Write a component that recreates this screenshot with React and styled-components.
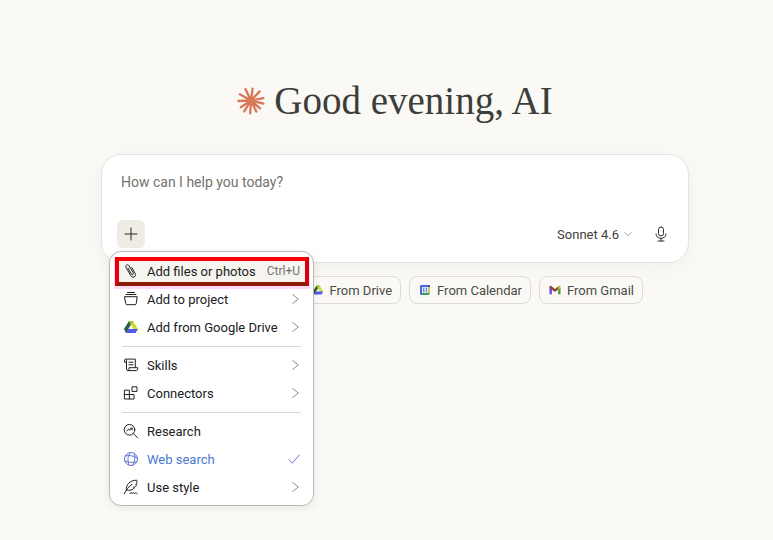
import styled, { createGlobalStyle, css } from 'styled-components'

const GlobalStyle = createGlobalStyle`
  *, *::before, *::after {
    box-sizing: border-box;
  }

  body {
    margin: 0;
    background: #faf9f5;
    color: #2b2b29;
    font-family: Roboto, 'Liberation Sans', Arial, sans-serif;
    font-size: 13px;
  }

  button, textarea {
    font: inherit;
    color: inherit;
  }
`

const Page = styled.main`
  min-height: 100vh;
  padding: 77px 84px 0 101px;
`

const Greeting = styled.header`
  display: flex;
  align-items: center;
  justify-content: center;
  gap: 9px;
  height: 48px;
  margin-bottom: 29px;
`

const Title = styled.h1`
  margin: 0;
  color: #3d3d3a;
  font-family: 'Liberation Serif', 'Times New Roman', serif;
  font-size: 39px;
  font-weight: 400;
  line-height: 48px;
  white-space: nowrap;
`

const Composer = styled.form`
  padding: 15px 15px 14px;
  border: 1px solid #e6e4dd;
  border-radius: 20px;
  background: #fff;
  box-shadow: 0 4px 20px rgba(0, 0, 0, 0.04);
`

const Prompt = styled.textarea`
  display: block;
  width: 100%;
  height: 24px;
  margin-bottom: 26px;
  padding: 0 4px;
  border: 0;
  outline: 0;
  background: none;
  font-size: 14px;
  line-height: 24px;
  resize: none;
  overflow: hidden;

  &::placeholder {
    color: #73726c;
    opacity: 1;
  }
`

const Toolbar = styled.div`
  display: flex;
  align-items: center;
  justify-content: space-between;
`

const ToolGroup = styled.div`
  display: flex;
  align-items: center;
  gap: 16px;
`

const MenuAnchor = styled.div`
  position: relative;
`

const IconButton = styled.button`
  display: grid;
  place-items: center;
  width: ${({ $width }) => $width || 28}px;
  height: 28px;
  padding: 0;
  border: 0;
  border-radius: 6px;
  background: ${({ $active }) => ($active ? '#efece5' : 'none')};
`

const ModelButton = styled.button`
  display: flex;
  align-items: center;
  gap: 4px;
  height: 28px;
  padding: 0;
  border: 0;
  background: none;
  color: #3d3d3a;
`

const Menu = styled.div`
  position: absolute;
  z-index: 2;
  top: 31px;
  left: -8px;
  width: 205px;
  padding: 5px 5px 4px;
  border: 1px solid #b9b8b6;
  border-radius: 12px;
  background: #fff;
  box-shadow: 0 2px 8px rgba(0, 0, 0, 0.08);
`

const Divider = styled.hr`
  height: 1px;
  margin: 5px 7px 4px;
  border: 0;
  background: #d9d8d4;
`

const MenuItem = styled.button`
  position: relative;
  display: flex;
  align-items: center;
  gap: 8px;
  width: 100%;
  height: 28px;
  padding: 0 8px;
  border: 0;
  background: none;
  color: ${({ $selected }) => ($selected ? '#4a78cf' : '#20201e')};
  text-align: left;
  white-space: nowrap;

  ${({ $marked }) =>
    $marked &&
    css`
      background: #f5f4ee;

      &::after {
        content: '';
        position: absolute;
        inset: 0 -1px -1px 0;
        border: 4px solid;
        border-color: #fb0007 #d80006 #8a1c05 #e80006;
        box-shadow: 0 2px 0 1px #ffd9f7;
      }
    `}
`

const Label = styled.span`
  flex: 1;
`

const Shortcut = styled.span`
  color: #73726c;
  font-size: 12px;
`

const Chips = styled.div`
  display: flex;
  justify-content: flex-end;
  gap: 8px;
  margin-top: 13px;
  padding-right: 46px;
`

const Chip = styled.button`
  display: flex;
  align-items: center;
  gap: 6px;
  height: 28px;
  padding: 0 8px 0 9px;
  border: 1px solid #dedcd5;
  border-radius: 8px;
  background: #faf9f5;
  color: #4a4a46;
  white-space: nowrap;
`

const Svg = styled.svg.attrs({ 'aria-hidden': true })`
  display: block;
  flex: none;
  width: ${({ $size }) => $size || 16}px;
  height: ${({ $size }) => $size || 16}px;
  fill: none;
  stroke: ${({ $color }) => $color || 'currentColor'};
  stroke-width: ${({ $weight }) => $weight || 1};
  stroke-linecap: round;
  stroke-linejoin: round;
`

function Burst() {
  return (
    <Svg $size={28} $color='#d97757' $weight={2.3} viewBox='0 0 28 28'>
      <path d='M14 13.5 8.4 2M14 13.5 15.6 1.6M14 13.5 22.6 4.4M14 13.5 26.4 11.2M14 13.5 26.4 16.6M14 13.5 23 21.4M14 13.5 19.3 24.6M14 13.5 13.2 26.4M14 13.5 7.2 24.4M14 13.5 3.8 20.2M14 13.5 1.4 14M14 13.5 2.8 7.2' />
    </Svg>
  )
}

function PaperclipIcon() {
  return (
    <Svg viewBox='0 0 16 16'>
      <path d='M5.1 5.2 8.3 11c.9 1.5 2.8.5 2-1.1L6 2.6C4.9.7 1.9 2.3 3 4.3l4.8 8.5c1.7 3 6 .7 4.4-2.3L8.8 4.6' />
    </Svg>
  )
}

function ProjectIcon() {
  return (
    <Svg viewBox='0 0 16 16'>
      <path d='M4.5 1.5h7M3 3.5h10M1.8 5.7h12.4l-1 7a1.2 1.2 0 0 1-1.2 1H4a1.2 1.2 0 0 1-1.2-1z' />
    </Svg>
  )
}

function DriveIcon({ size }) {
  return (
    <Svg $size={size} $color='none' viewBox='0 0 16 16'>
      <path fill='#cfdc2c' d='M5.8 2h4.4l4.9 8.4h-4.4z' />
      <path fill='#5458e8' d='M4.4 10h10.5l-2.3 4H2.8z' />
      <path fill='#315c48' d='m1 10 2 4 2.3-4L8 5.5 6 2z' />
      <path fill='#8cc63c' d='M5.8 2h4.4L8 5.8z' />
    </Svg>
  )
}

function SkillsIcon() {
  return (
    <Svg viewBox='0 0 16 16'>
      <path d='M3.5 5.2H1.5V3.5a1.4 1.4 0 0 1 1.4-1.4h9.4v8.4M3.5 3v9.2c0 .8.6 1.4 1.3 1.4h8.7c.8 0 1.2-.6 1.2-1.4v-1.5H6v1.5c0 .8-.5 1.4-1.2 1.4M6 5.2h3.8M6 7.8h4' />
    </Svg>
  )
}

function ConnectorsIcon() {
  return (
    <Svg viewBox='0 0 16 16'>
      <path d='M1.8 5.2h4.6V14H1.8zM1.8 9.5H11V14H6.4M9.4 1.8H14v4.6H9.4z' />
    </Svg>
  )
}

function ResearchIcon() {
  return (
    <Svg viewBox='0 0 16 16'>
      <circle cx='6.5' cy='6.8' r='5.3' />
      <path d='m10.4 10.6 4.3 4.2M3.8 8l1.9-2 1.4 1.3 2-2M7.6 5.2h1.6v1.6' />
    </Svg>
  )
}

function WebIcon() {
  return (
    <Svg viewBox='0 0 16 16' $color='#6672d4'>
      <circle cx='8' cy='8' r='6.5' />
      <path d='M7.6 1.6C4.6 4.6 4 9.6 6.2 14.2M11.2 2.4c1.4 4.2.7 8.4-1.8 12M2.2 5c3.8-1 8-.4 11.9 1.8M1.8 9.8c3.6 1.8 8 2.2 12 1' />
    </Svg>
  )
}

function StyleIcon() {
  return (
    <Svg viewBox='0 0 16 16'>
      <path d='M1.3 14.8C3 10.9 5.4 7.8 9 5.2M3.4 11C2.6 5.8 6.8 1.2 13.8 1.2c.5 2.1-.1 3.5-1.2 4.2l1 .2c-.4 1.7-1.7 2.5-3.2 2.6l1 .6c-1.6 2.3-4.4 3.1-8 2.2M7 14.6c1-1.5 1.6-1.4 2.1 0 1-1.4 1.7-1.4 2.2 0 1-.9 1.8-.9 2.9 0' />
    </Svg>
  )
}

function ChevronRight() {
  return (
    <Svg $size={10} $color='#8c8b86' viewBox='0 0 10 10'>
      <path d='M2.7.6 8.3 5 2.7 9.4' />
    </Svg>
  )
}

function ChevronDown() {
  return (
    <Svg $size={10} $color='#a5a49f' viewBox='0 0 10 10'>
      <path d='M1.8 3.5 5 6.8l3.2-3.3' />
    </Svg>
  )
}

function CheckIcon() {
  return (
    <Svg $size={12} $color='#6672c8' viewBox='0 0 12 12'>
      <path d='m1 6.5 3.3 3.7L11.2 2' />
    </Svg>
  )
}

function CalendarIcon() {
  return (
    <Svg $size={12} $color='none' viewBox='0 0 12 12'>
      <path fill='#4a6ad8' d='M1 2a1 1 0 0 1 1-1h8v10H2a1 1 0 0 1-1-1z' />
      <path fill='#38489c' d='M9.3 1H10a1 1 0 0 1 1 1v1H9.3z' />
      <path fill='#d6cf2f' d='M9.3 3H11v6H9.3z' />
      <path fill='#43a05a' d='M3 9h6.3v2H3z' />
      <path fill='#5f7a3c' d='M9.3 9H11l-1.7 2z' />
      <path fill='#e8ecff' d='M3 3h6.3v6H3z' />
      <path stroke='#4a6ad8' d='M4.8 4v4M7.3 4v4' />
    </Svg>
  )
}

function GmailIcon() {
  return (
    <Svg $size={12} $color='none' viewBox='0 0 12 12'>
      <path fill='#6a4be0' d='M.5 3h2.4v7.3H.5z' />
      <path fill='#4c9a45' d='M9.1 4h2.4v6.3H9.1z' />
      <path fill='#8a4a3a' d='M.5 2.2 2 1.8l4 3.3 4-3.3v2.9L6 8 .5 4z' />
      <path fill='#c9b92c' d='M9.1 2.6 10 1.8l1.5.4V4L9.1 6z' />
    </Svg>
  )
}

function App() {
  return (
    <>
      <GlobalStyle />
      <Page>
        <Greeting>
          <Burst />
          <Title>Good evening, AI</Title>
        </Greeting>

        <Composer onSubmit={(e) => e.preventDefault()}>
          <Prompt aria-label='Message' placeholder='How can I help you today?' rows={1} />
          <Toolbar>
            <MenuAnchor>
              <IconButton type='button' $active aria-label='Add' aria-haspopup='menu' aria-expanded='true'>
                <Svg viewBox='0 0 16 16'>
                  <path d='M8 2v12M2 8h12' />
                </Svg>
              </IconButton>

              <Menu role='menu'>
                <MenuItem type='button' role='menuitem' $marked>
                  <PaperclipIcon />
                  <Label>Add files or photos</Label>
                  <Shortcut>Ctrl+U</Shortcut>
                </MenuItem>
                <MenuItem type='button' role='menuitem'>
                  <ProjectIcon />
                  <Label>Add to project</Label>
                  <ChevronRight />
                </MenuItem>
                <MenuItem type='button' role='menuitem'>
                  <DriveIcon />
                  <Label>Add from Google Drive</Label>
                  <ChevronRight />
                </MenuItem>
                <Divider />
                <MenuItem type='button' role='menuitem'>
                  <SkillsIcon />
                  <Label>Skills</Label>
                  <ChevronRight />
                </MenuItem>
                <MenuItem type='button' role='menuitem'>
                  <ConnectorsIcon />
                  <Label>Connectors</Label>
                  <ChevronRight />
                </MenuItem>
                <Divider />
                <MenuItem type='button' role='menuitem'>
                  <ResearchIcon />
                  <Label>Research</Label>
                </MenuItem>
                <MenuItem type='button' role='menuitemcheckbox' aria-checked='true' $selected>
                  <WebIcon />
                  <Label>Web search</Label>
                  <CheckIcon />
                </MenuItem>
                <MenuItem type='button' role='menuitem'>
                  <StyleIcon />
                  <Label>Use style</Label>
                  <ChevronRight />
                </MenuItem>
              </Menu>
            </MenuAnchor>

            <ToolGroup>
              <ModelButton type='button'>
                Sonnet 4.6
                <ChevronDown />
              </ModelButton>
              <IconButton type='button' $width={24} aria-label='Dictate'>
                <Svg viewBox='0 0 16 16'>
                  <rect x='5.5' y='1' width='5' height='9' rx='2.5' />
                  <path d='M3 8c0 6 10 6 10 0M8 12.5V15M5 15h6' />
                </Svg>
              </IconButton>
            </ToolGroup>
          </Toolbar>
        </Composer>

        <Chips>
          <Chip type='button'>
            <DriveIcon size={12} />
            From Drive
          </Chip>
          <Chip type='button'>
            <CalendarIcon />
            From Calendar
          </Chip>
          <Chip type='button'>
            <GmailIcon />
            From Gmail
          </Chip>
        </Chips>
      </Page>
    </>
  )
}

export default App
